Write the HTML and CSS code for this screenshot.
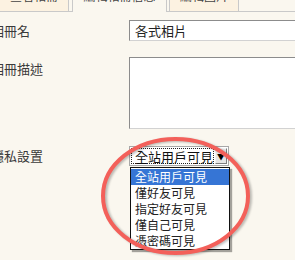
FILE: index.html
```html
<!DOCTYPE html>
<html lang="zh-Hant">
<head>
  <meta charset="UTF-8" />
  <title>編輯相冊信息</title>
  <link rel="stylesheet" href="styles.css">
</head>
<body>

  <div class="tabs">
    <div class="tab"><span>查看相冊</span></div>
    <div class="tab active"><span>編輯相冊信息</span></div>
    <div class="tab"><span>編輯圖片</span></div>
  </div>

  <form class="form">
    <div class="row">
      <label>相冊名</label>
      <input class="field" type="text" value="各式相片">
    </div>
    <div class="row row-top">
      <label>相冊描述</label>
      <textarea class="field area"></textarea>
    </div>
    <div class="row">
      <label>隱私設置</label>
      <div class="select-wrap">
        <div class="select">
          <span class="value">全站用戶可見</span>
          <span class="arrow">▼</span>
        </div>
        <ul class="options">
          <li class="selected">全站用戶可見</li>
          <li>僅好友可見</li>
          <li>指定好友可見</li>
          <li>僅自己可見</li>
          <li>憑密碼可見</li>
        </ul>
      </div>
    </div>
  </form>

  <!-- red highlight circle drawn over the dropdown -->
  <svg class="mark" width="295" height="260" viewBox="0 0 295 260">
    <ellipse cx="175.5" cy="196" rx="72.5" ry="57" fill="none" stroke="#f3605a" stroke-width="4"/>
  </svg>

</body>
</html>
```

FILE: styles.css
```css
* {
  box-sizing: border-box;
  margin: 0;
  padding: 0;
  font-family: "Noto Sans CJK TC", "Noto Sans", sans-serif;
}

body {
  background: #faf7ef;
  color: #333;
  width: 295px;
  height: 260px;
  overflow: hidden;
  position: relative;
}

/* tab strip, only the bottom of it is in view */
.tabs {
  display: flex;
  align-items: flex-start;
  height: 12px;
  border-bottom: 1px solid #c9c9c9;
}

.tab {
  height: 11px;
  background: #fcf2e1;
  border-right: 1px solid #c9c9c9;
  border-left: 1px solid #c9c9c9;
  text-align: center;
  font-size: 12px;
  line-height: 14px;
  color: #444;
}

.tab span {
  display: block;
  margin-top: -11px;
}

.tab:first-child {
  width: 69px;
  border-left: none;
}

.tab.active {
  width: 95px;
  height: 12px;
  margin-left: 3px;
  background: #faf7ef;
}

.tab:last-child {
  width: 70px;
  margin-left: 2px;
}

/* form */
.form {
  margin-left: -9px;
  padding-top: 8px;
}

.row {
  display: grid;
  grid-template-columns: 138px auto;
  align-items: center;
  margin-bottom: 16px;
}

.row-top {
  align-items: start;
  margin-bottom: 17px;
}

.row label {
  font-size: 13px;
  line-height: 16px;
  color: #3a3a3a;
}

.row-top label {
  padding-top: 4px;
}

.field {
  width: 200px;
  height: 21px;
  border: 1px solid;
  border-color: #8c8c8c #d2d2d2 #d2d2d2 #8c8c8c;
  background: #fff;
  padding: 0 5px;
  font-size: 13px;
  color: #222;
  outline: none;
}

.area {
  height: 72px;
  resize: none;
}

/* fake open select */
.select-wrap {
  position: relative;
  width: 100px;
}

.select {
  display: flex;
  width: 100px;
  height: 20px;
  border: 1px solid #a8a8a8;
  background: #fff;
  padding: 1px;
  gap: 1px;
}

.select .value {
  flex: 1;
  border: 1px dotted #222;
  padding-left: 3px;
  font-size: 13px;
  line-height: 15px;
  color: #111;
  white-space: nowrap;
}

.select .arrow {
  width: 16px;
  background: #e6e6e6;
  border: 1px solid;
  border-color: #f4f4f4 #7d7d7d #7d7d7d #f4f4f4;
  font-size: 8px;
  line-height: 15px;
  text-align: center;
  color: #000;
}

.options {
  position: absolute;
  top: 21px;
  left: 1px;
  width: 100px;
  list-style: none;
  background: #fff;
  border: 1px solid #111;
  padding-top: 1px;
  box-shadow: 2px 2px 1px rgba(0, 0, 0, 0.35);
}

.options li {
  height: 16px;
  padding-left: 4px;
  font-size: 12px;
  line-height: 16px;
  color: #222;
  white-space: nowrap;
}

.options li.selected {
  background: #3675d5;
  color: #fff;
}

.mark {
  position: absolute;
  left: 0;
  top: 0;
  pointer-events: none;
  filter: drop-shadow(2px 1px 1px rgba(0, 0, 0, 0.25));
}
```
